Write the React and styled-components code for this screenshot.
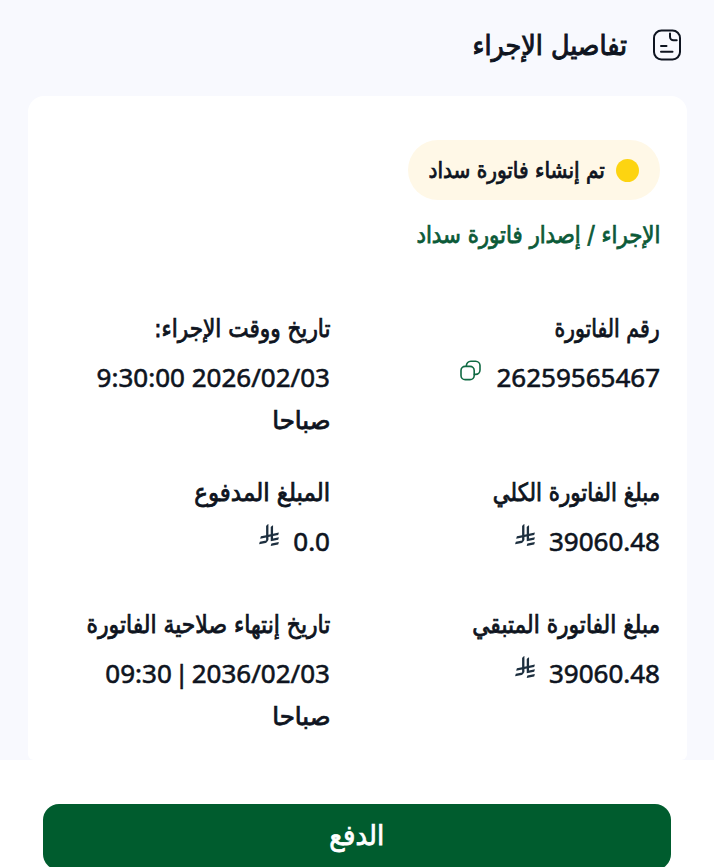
import React from 'react';
import styled, { createGlobalStyle } from 'styled-components';

const GlobalStyle = createGlobalStyle`
    *{
        box-sizing:border-box;
    }
    body{
        margin:0;
        background:#ffffff;
        color:#0e1420;
        font-family:"DejaVu Sans Condensed", "DejaVu Sans", sans-serif;
    }
`

const Page = styled.div`
    direction:rtl;
    width:714px;
    height:867px;
    overflow:hidden;
    background:#ffffff;
`

const Content = styled.main`
    height:760px;
    padding:0 27px 0 28px;
    background:#f8f9fe;
`

const Header = styled.header`
    display:flex;
    align-items:center;
    gap:25px;
    height:96px;
    padding:0 5px 6px 0;
`

//Keeps each arabic line at its own width, $stretch is the horizontal ratio
const Text = styled.span`
    display:inline-block;
    white-space:nowrap;
    font-size:${props => props.$size || 25}px;
    transform:scaleX(${props => props.$stretch || 1});
    transform-origin:${props => props.$origin || 'right'} center;
    -webkit-text-stroke:${props => props.$stroke || 0.75}px currentColor;
`

const Title = styled.h1`
    margin:0;
    font-weight:400;
    line-height:40px;
`

const Card = styled.section`
    height:664px;
    padding:44px 27px 0 28px;
    border-radius:16px 16px 6px 6px;
    background:#ffffff;
`

const Status = styled.div`
    display:flex;
    align-items:center;
    gap:11px;
    width:252px;
    height:60px;
    padding-right:21px;
    border-radius:30px;
    background:#fff8e7;
`

const Dot = styled.span`
    flex:none;
    width:23px;
    height:23px;
    border-radius:50%;
    background:#fdd411;
`

const Action = styled.p`
    margin:13px 0 0;
    height:44px;
    line-height:44px;
    color:#0b5a38;
`

const Details = styled.div`
    display:grid;
    grid-template-columns:274px 1fr;
    column-gap:56px;
    row-gap:31px;
    margin-top:51px;
`

const Item = styled.div`
    min-height:${props => props.$height || 0}px;
`

const Label = styled.div`
    height:42px;
    line-height:42px;
`

const Value = styled.div`
    display:flex;
    gap:${props => props.$gap || 14}px;
    height:42px;
    margin-top:7px;
    line-height:41px;
`

const Number = styled.span`
    font-family:"Noto Sans", sans-serif;
    font-size:26px;
    word-spacing:${props => props.$space || 0}px;
    white-space:nowrap;
    -webkit-text-stroke:0.6px currentColor;
`

const Period = styled.div`
    height:42px;
    line-height:44px;
`

const Icon = styled.svg`
    flex:none;
    margin-top:${props => props.$top || 0}px;
`

const Footer = styled.footer`
    padding:44px 43px 0;
`

const PayButton = styled.button`
    display:block;
    width:628px;
    height:66px;
    padding:0;
    border:0;
    border-radius:16px;
    background:#005c2e;
    color:#ffffff;
    font-family:inherit;
    line-height:64px;
`

function DocumentIcon(){
    return(
        <Icon width="30" height="32" viewBox="0 0 30 32" fill="none" stroke="#0e1420" strokeWidth="2" strokeLinecap="round">
            <rect x="2" y="1.5" width="26" height="29" rx="7.5" />
            <path d="M18 4.5v3.2a3.5 3.5 0 0 0 3.5 3.5h3.2" />
            <path d="M9 17h5.5M9 22.8h11.5" />
        </Icon>
    )
}

function CopyIcon(){
    return(
        <Icon $top={3} width="21" height="21" viewBox="0 0 21 21" fill="none" stroke="#0f6a43" strokeWidth="1.6" strokeLinecap="round">
            <rect x="1" y="6.4" width="13.2" height="13.2" rx="4.2" />
            <path d="M6.4 6.2V5.6a4.4 4.4 0 0 1 4.4-4.4h4.8a4.4 4.4 0 0 1 4.4 4.4v4.4a4.4 4.4 0 0 1-4.4 4.4h-1.2" />
        </Icon>
    )
}

function RiyalIcon(){
    return(
        <Icon $top={3} width="20" height="22" viewBox="0 0 1124.14 1256.39" fill="#1d2f3f">
            <path d="M699.62,1113.02h0c-20.06,44.48-33.32,92.75-38.4,143.37l424.51-90.24c20.06-44.47,33.31-92.75,38.4-143.37l-424.51,90.24Z" />
            <path d="M1085.73,895.8c20.06-44.47,33.32-92.75,38.4-143.37l-330.68,70.33v-135.2l292.27-62.11c20.06-44.47,33.32-92.75,38.4-143.37l-330.68,70.27V66.13c-50.67,28.45-95.67,66.32-132.25,110.99v403.35l-132.25,28.11V0c-50.67,28.44-95.67,66.32-132.25,110.99v525.69l-295.91,62.88c-20.06,44.47-33.33,92.75-38.42,143.37l334.33-71.05v170.26l-358.3,76.14c-20.06,44.47-33.32,92.75-38.4,143.37l375.04-79.7c30.53-6.35,56.77-24.4,73.83-49.24l68.78-101.97v-.02c7.14-10.55,11.3-23.27,11.3-36.97v-149.98l132.25-28.11v270.4l424.53-90.28Z" />
        </Icon>
    )
}

const details = [
    { label:'رقم الفاتورة', stretch:0.91, number:'26259565467', icon:<CopyIcon />, gap:15 },
    { label:'تاريخ ووقت الإجراء:', stretch:0.96, number:'2026/02/03 9:30:00', period:'صباحا' },
    { label:'مبلغ الفاتورة الكلي', stretch:0.95, number:'39060.48', icon:<RiyalIcon />, height:101 },
    { label:'المبلغ المدفوع', stretch:1.02, number:'0.0', icon:<RiyalIcon /> },
    { label:'مبلغ الفاتورة المتبقي', stretch:0.968, number:'39060.48', icon:<RiyalIcon /> },
    { label:'تاريخ إنتهاء صلاحية الفاتورة', stretch:0.974, number:'2036/02/03 | 09:30', space:-4, period:'صباحا' },
];

function Detail(props){
    const { label, stretch, number, space, icon, gap, period, height } = props.detail;

    return(
        <Item $height={height}>
            <Label><Text $stretch={stretch}>{label}</Text></Label>
            <Value $gap={gap}>
                <Number $space={space}>{number}</Number>
                {icon}
            </Value>
            {period && <Period><Text $stretch={1.09}>{period}</Text></Period>}
        </Item>
    )
}

function App(){
    return(
        <Page>
            <GlobalStyle />
            <Content>
                <Header>
                    <DocumentIcon />
                    <Title><Text $size={28} $stretch={1.01} $stroke={0.9}>تفاصيل الإجراء</Text></Title>
                </Header>
                <Card>
                    <Status>
                        <Dot />
                        <Text $size={23} $stretch={0.97}>تم إنشاء فاتورة سداد</Text>
                    </Status>
                    <Action><Text $size={24} $stretch={0.986}>الإجراء / إصدار فاتورة سداد</Text></Action>
                    <Details>
                        {details.map(detail => <Detail key={detail.label} detail={detail} />)}
                    </Details>
                </Card>
            </Content>
            <Footer>
                <PayButton><Text $size={28} $stretch={1.03} $origin="center">الدفع</Text></PayButton>
            </Footer>
        </Page>
    )
}

export default App
